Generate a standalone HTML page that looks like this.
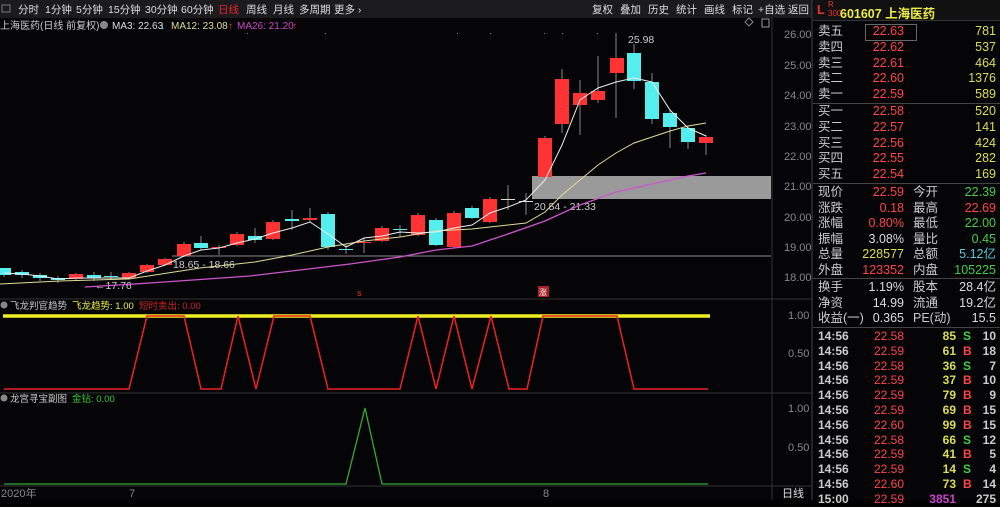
<!DOCTYPE html><html><head><meta charset="utf-8"><style>
body{margin:0;width:1000px;height:500px;background:#000;overflow:hidden;font-family:"Liberation Sans","Noto Sans CJK SC",sans-serif}
svg text{font-family:"Liberation Sans","Noto Sans CJK SC",sans-serif}
</style></head><body>
<svg width="1000" height="500" xmlns="http://www.w3.org/2000/svg">
<rect width="1000" height="500" fill="#050507"/>
<rect x="0" y="0" width="812" height="18" fill="#1b1b1d"/>
<rect x="2" y="5" width="8" height="7" fill="none" stroke="#777"/>
<g font-size="10.5" fill="#ddd">
<text x="18" y="13">分时</text><text x="45" y="13">1分钟</text><text x="76" y="13">5分钟</text><text x="108" y="13">15分钟</text><text x="145" y="13">30分钟</text><text x="181" y="13">60分钟</text>
<text x="218" y="13" fill="#e23">日线</text><text x="246" y="13">周线</text><text x="273" y="13">月线</text><text x="299" y="13">多周期</text><text x="334" y="13">更多 ›</text>
<text x="592" y="13">复权</text><text x="620" y="13">叠加</text><text x="648" y="13">历史</text><text x="676" y="13">统计</text><text x="704" y="13">画线</text><text x="732" y="13">标记</text><text x="758" y="13">+自选</text><text x="788" y="13">返回</text>
</g>
<g font-size="10">
<text x="0" y="29" fill="#ccc">上海医药(日线 前复权)</text>
<circle cx="104" cy="25" r="4" fill="#888"/>
<text x="112" y="29" fill="#ddd">MA3: 22.63</text><text x="160" y="29" fill="#4cc">↓</text>
<text x="171" y="29" fill="#dd9">MA12: 23.08</text><text x="228" y="29" fill="#e33">↑</text>
<text x="237" y="29" fill="#c4c">MA26: 21.20</text><text x="292" y="29" fill="#e33">↑</text>
</g>
<g fill="#777"><rect x="247" y="33" width="1" height="1"/><rect x="325" y="33" width="1" height="1"/><rect x="457" y="33" width="1" height="1"/><rect x="490" y="33" width="1" height="1"/><rect x="544" y="33" width="1" height="1"/><rect x="562" y="33" width="1" height="1"/><rect x="597" y="33" width="1" height="1"/><rect x="633" y="33" width="1" height="1"/></g>
<path d="M749 18l4 4-4 4-4-4z" fill="none" stroke="#888"/><rect x="762" y="19" width="7" height="8" fill="none" stroke="#999"/>
<line x1="772" y1="18" x2="772" y2="500" stroke="#333"/>
<line x1="812" y1="0" x2="812" y2="500" stroke="#444"/>
<line x1="0" y1="299" x2="812" y2="299" stroke="#333"/>
<line x1="0" y1="393" x2="812" y2="393" stroke="#333"/>
<line x1="0" y1="486" x2="812" y2="486" stroke="#333"/>
<g font-size="11" fill="#888">
<text x="784" y="38">26.00</text><text x="784" y="69">25.00</text><text x="784" y="99">24.00</text><text x="784" y="130">23.00</text><text x="784" y="160">22.00</text><text x="784" y="190">21.00</text><text x="784" y="221">20.00</text><text x="784" y="251">19.00</text><text x="784" y="281">18.00</text>
<text x="788" y="319">1.00</text><text x="788" y="357">0.50</text><text x="788" y="412">1.00</text><text x="788" y="451">0.50</text>
<text x="1" y="497">2020年</text><text x="129" y="497">7</text><text x="543" y="497">8</text><text x="782" y="497" fill="#ddd">日线</text>
</g>
<rect x="532" y="176" width="239" height="23" fill="#9a9a9a"/>
<line x1="172" y1="256" x2="771" y2="256" stroke="#888"/>
<g font-size="10.5" fill="#ccc"><text x="534" y="210">20.54 - 21.33</text><text x="173" y="268">18.65 - 18.66</text><text x="95" y="289">←17.76</text><text x="628" y="43">25.98</text></g>
<g stroke-width="1">
<path d="M4 270v7M22 270v8M40 273v8M58 276v7M76 273v7M94 272v9M111 272v8M129 272v7M147 264v9M165 258v8M184 242v15M201 236v14M219 245v10M237 232v14M255 228v15M273 220v20M292 210v20M310 208v14M328 212v38M346 244v10M364 238v15M382 226v16M400 225v12M418 213v23M436 218v28M454 211v37M472 206v13M490 197v26M508 185v25M526 193v22M545 136v42M562 69v64M580 80v55M598 56v47M616 33v85M634 44v45M652 73v51M670 110v38M688 126v23M706 135v20" stroke="#888"/>
</g>
<g id="cand"></g>
<polyline fill="none" stroke="#c5c" stroke-width="1.3" points="85,287 150,283 250,276 300,270 350,264 400,257 436,250 472,246 508,234 545,221 580,205 616,192 652,184 688,176 706,173"/>
<polyline fill="none" stroke="#dd9" stroke-width="1" points="0,284 60,281 129,279 200,268 255,262 292,255 328,247 364,241 400,237 436,231 472,229 508,225 526,223 545,212 562,195 580,180 598,165 616,153 634,143 652,137 670,131 688,126 706,123"/>
<polyline fill="none" stroke="#eee" stroke-width="1" points="4,273 22,274 40,276 58,279 76,278 94,278 111,278 129,278 147,271 165,265 184,256 201,250 219,248 237,243 255,239 273,233 292,228 310,222 328,234 346,247 364,238 382,236 400,232 418,233 436,232 454,228 472,225 490,213 508,207 526,200 545,180 562,145 580,100 598,88 616,82 634,78 652,82 670,110 688,128 706,136"/>
<text x="357" y="296" font-size="9" fill="#e33">s</text><rect x="538" y="286" width="11" height="11" fill="#a22"/><text x="539" y="295" font-size="8" fill="#fff">涨</text>
<circle cx="4" cy="305" r="3.5" fill="#888"/>
<g font-size="9.5"><text x="10" y="309" fill="#ccc">飞龙判官趋势</text><text x="72" y="309" fill="#ee4">飞龙趋势: 1.00</text><text x="139" y="309" fill="#c22">短时卖出: 0.00</text></g>
<line x1="3" y1="316" x2="710" y2="316" stroke="#ee2" stroke-width="3.5"/>
<polyline fill="none" stroke="#e22" stroke-width="1.5" points="4,389 129,389 147,316 184,316 201,389 221,389 238,316 256,389 274,316 310,316 328,389 400,389 418,316 436,389 454,316 472,389 491,316 509,389 527,389 543,316 617,316 634,389 708,389"/>
<circle cx="4" cy="398" r="3.5" fill="#888"/>
<g font-size="9.5"><text x="10" y="402" fill="#ccc">龙宫寻宝副图</text><text x="72" y="402" fill="#3c3">金钻: 0.00</text></g>
<polyline fill="none" stroke="#3a3" stroke-width="1.3" points="4,484 346,484 365,408 382,484 708,484"/>
</svg>
<script>
var D=[[4,268,275,0],[22,272,275,0],[40,275,278,0],[58,278,280,0],[76,274,279,1],[94,275,278,0],[111,276,277,0],[129,273,278,1],[147,265,272,1],[165,259,265,1],[184,244,256,1],[201,243,248,0],[219,247,248,1],[237,234,245,1],[255,236,240,0],[273,222,239,1],[292,219,221,0],[310,218,220,1],[328,214,247,0],[346,249,250,0],[364,242,243,1],[382,228,241,1],[400,229,230,0],[418,215,235,1],[436,220,245,0],[454,213,247,1],[472,208,218,0],[490,199,222,1],[508,199,200,2],[526,201,202,2],[545,138,177,1],[562,79,124,1],[580,93,105,1],[598,91,100,1],[617,58,73,1],[634,53,81,0],[652,82,119,0],[670,113,127,0],[688,128,142,0],[706,137,143,1]];
var s='';D.forEach(function(d){var c=d[3]==1?'#f33':d[3]==0?'#5ee':'#ddd';var h=Math.max(1,d[2]-d[1]);s+='<rect x="'+(d[0]-7)+'" y="'+d[1]+'" width="14" height="'+h+'" fill="'+c+'"/>';});
document.getElementById('cand').innerHTML=s;
</script>
<div style="position:absolute;left:813px;top:0;width:187px;height:500px;font-size:12.5px;color:#ccc">
<div style="height:20px;background:#111;border-bottom:1px solid #333;position:relative">
<span style="position:absolute;left:4px;top:3px;color:#e33;font-weight:bold">L</span>
<span style="position:absolute;left:15px;top:0;color:#e33;font-size:8px;line-height:9px">R<br>300</span>
<span style="position:absolute;left:27px;top:3px;color:#ee4;font-weight:bold">601607 上海医药</span></div>
<div id="rp"></div></div>
<script>
var h='';function row(y,a,b,bc,c,cc,d,dc){h+='<div style="position:absolute;top:'+(y-9)+'px;left:5px;width:178px;height:16px;line-height:16px">';h+='<span style="position:absolute;left:0">'+a+'</span><span style="position:absolute;right:92px;color:'+bc+'">'+b+'</span>';if(c)h+='<span style="position:absolute;left:95px">'+c+'</span>';h+='<span style="position:absolute;right:0;color:'+dc+'">'+d+'</span></div>';}
var ask=[['卖五','22.63','781'],['卖四','22.62','537'],['卖三','22.61','464'],['卖二','22.60','1376'],['卖一','22.59','589'],['买一','22.58','520'],['买二','22.57','141'],['买三','22.56','424'],['买四','22.55','282'],['买五','22.54','169']];
ask.forEach(function(a,i){row(32+i*15.8+(i>4?1:0),a[0],a[1],'#f44','', '',a[2],'#dd5');});
var st=[['现价','22.59','#f44','今开','22.39','#4c4'],['涨跌','0.18','#f44','最高','22.69','#f44'],['涨幅','0.80%','#f44','最低','22.00','#4c4'],['振幅','3.08%','#ddd','量比','0.45','#4c4'],['总量','228577','#dd5','总额','5.12亿','#5cd'],['外盘','123352','#f44','内盘','105225','#4c4'],['换手','1.19%','#ddd','股本','28.4亿','#ddd'],['净资','14.99','#ddd','流通','19.2亿','#ddd'],['收益(一)','0.365','#ddd','PE(动)','15.5','#ddd']];
st.forEach(function(a,i){row(193+i*15.5+(i>5?2:0),a[0],a[1],a[2],a[3],'',a[4],a[5]);});
var tr=[['22.58','85','S'],['22.59','61','B'],['22.58','36','S'],['22.59','37','B'],['22.59','79','B'],['22.59','69','B'],['22.60','99','B'],['22.58','66','S'],['22.59','41','B'],['22.59','14','S'],['22.60','73','B'],['22.59','3851','']];
var cnt=['10','18','7','10','9','15','15','12','5','4','14','275'];
tr.forEach(function(t,i){var y=337+i*14.8;h+='<div style="position:absolute;top:'+(y-8)+'px;left:5px;width:178px;height:15px;line-height:15px;font-weight:bold;font-size:12px"><span style="position:absolute;left:0">'+(i==11?'15:00':'14:56')+'</span><span style="position:absolute;right:92px;color:#f44;font-weight:normal">'+t[0]+'</span><span style="position:absolute;right:40px;color:'+(i==11?'#c4c':'#dd5')+'">'+t[1]+'</span><span style="position:absolute;left:145px;color:'+(t[2]=='S'?'#4c4':'#f44')+'">'+t[2]+'</span><span style="position:absolute;right:0">'+cnt[i]+'</span></div>';});
h+='<div style="position:absolute;top:103px;left:0;width:187px;border-top:1px solid #444"></div><div style="position:absolute;top:183px;left:0;width:187px;border-top:1px solid #444"></div><div style="position:absolute;top:278px;left:0;width:187px;border-top:1px solid #444"></div><div style="position:absolute;top:327px;left:0;width:187px;border-top:1px solid #444"></div><div style="position:absolute;top:24px;left:52px;width:50px;height:15px;border:1px solid #666"></div>';
document.getElementById('rp').innerHTML=h;
</script>
</body></html>
